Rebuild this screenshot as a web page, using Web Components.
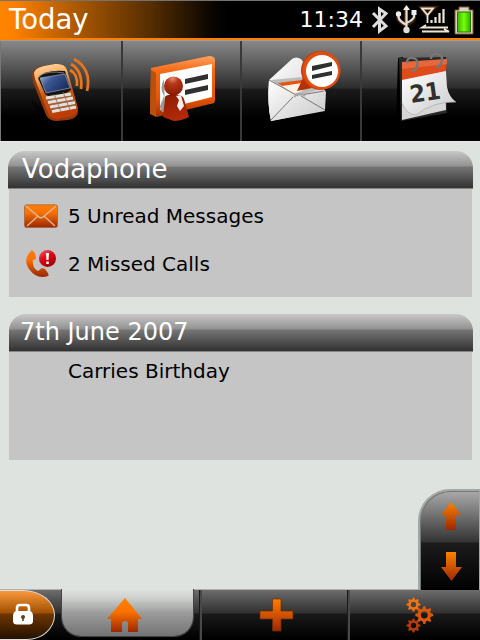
<!DOCTYPE html>
<html lang="en"><head><meta charset="utf-8"><title>Today</title>
<style>
html,body{margin:0;height:100%;overflow:hidden;background:#dfe3df;font-family:"DejaVu Sans",sans-serif}
svg{display:block}
</style></head><body>
<svg width="0" height="0" style="position:absolute"><defs>
<linearGradient id="or" x2="0" y2="1"><stop stop-color="#ff7e08"/><stop offset=".35" stop-color="#f97205"/><stop offset="1" stop-color="#992600"/></linearGradient>
<linearGradient id="edge" x2="0" y2="1"><stop stop-color="#ffa062"/><stop offset=".25" stop-color="#f26a12"/><stop offset=".7" stop-color="#e65408"/><stop offset="1" stop-color="#9e3300"/></linearGradient>
<linearGradient id="phone" x2=".2" y2="1"><stop stop-color="#ffe0ad"/><stop offset=".25" stop-color="#f9b068"/><stop offset=".6" stop-color="#c85713"/><stop offset="1" stop-color="#bd3d08"/></linearGradient>
<linearGradient id="screen" x2="1" y2=".6"><stop stop-color="#9dbbe6"/><stop offset=".4" stop-color="#3c5891"/><stop offset="1" stop-color="#172c60"/></linearGradient>
<linearGradient id="paper" x2="1" y2="1"><stop stop-color="#fff"/><stop offset="1" stop-color="#c9c9c9"/></linearGradient>
<radialGradient id="head" cx=".45" cy=".1" r=".9"><stop stop-color="#e58a70"/><stop offset=".35" stop-color="#b53616"/><stop offset="1" stop-color="#861a00"/></radialGradient>
<linearGradient id="torso" x2=".3" y2="1"><stop stop-color="#8a1c04"/><stop offset="1" stop-color="#b32a08"/></linearGradient>
<linearGradient id="red" x2=".6" y2="1"><stop stop-color="#f1676d"/><stop offset=".5" stop-color="#df0717"/><stop offset="1" stop-color="#a30009"/></linearGradient>
</defs></svg>
<today-screen>
<status-bar slot="status" heading="Today" time="11:34"></status-bar>
<app-tile slot="apps"><svg width="120" height="100" viewBox="1 41 120 100">
<path d="M32 100Q31 108 48 122L46 111z" fill="#000" opacity=".5"/>
<path d="M32 75Q33 68 42 66L55 64Q65 63 67 70L78 110Q79 118 68 120L57 121Q49 121 46 115L33 82Z" fill="#96380b"/>
<path d="M34 73Q35 68 44 66L55 64Q65 63 67 70L78 108Q78 115 68 117L58 119Q50 119 48 113L35 79Z" fill="url(#phone)"/>
<path d="M38 78Q46 69 65 71L71 90Q63 96 48 96L45 94Z" fill="#151515"/><path d="M39 76Q48 70 64 73" stroke="#777" fill="none"/>
<path d="M40 78L65 74L70 88L46 93Z" fill="url(#screen)" stroke="#a5b5d2" stroke-width=".6"/>
<g stroke="#e0dfda" stroke-width="3.200"><path d="M46 98L71 94M48 102.500L73 98M50 107L75 102.500M52 111.500L76 107"/></g><g stroke="#8b7060" stroke-width=".8"><path d="M54 94L61 112M63 92L70 110M47 100.500L72 96M49 105L74 100.500M51 109.500L75 105"/></g>
<g fill="none" stroke-width="2.800"><path d="M70 70Q78 74 77 86" stroke="#ef7918"/><path d="M71 64Q83 71 81 89" stroke="#e97519"/><path d="M74 59Q92 69 87 91" stroke="#e4751c"/></g>
</svg></app-tile>
<app-tile slot="apps"><svg width="117" height="100" viewBox="123 41 117 100">
<path d="M151 68L209 56Q215 56 215 60V100Q215 104 210 104L157 117L150 113Z" fill="url(#edge)"/>
<path d="M151 70L156 73V117L150 114Z" fill="#b85110"/>
<path d="M160 74L212 64V97L160 110Z" fill="#fff"/>
<path d="M185 79L208 74V79L185 84ZM185 90L208 85V90L185 95Z" fill="#303030"/>
<path d="M164 79Q159 88 164 96L160 106Q160 113 165 112Z" fill="#9b9b9b"/>
<path d="M165 97Q167 94 174 95Q182 94 184 99L189 117Q181 121 174 121L163 117Z" fill="url(#torso)"/>
<path d="M176 96L181 95L182 99L184 106L180 111L177 106L179 100Z" fill="#eee"/>
<circle cx="173.500" cy="86" r="9.500" fill="url(#head)"/>
</svg></app-tile>
<app-tile slot="apps"><svg width="118" height="100" viewBox="242 41 118 100">
<path d="M269 80L292 59Q296 56 301 59L326 92L325 110L271 121Q267 104 269 80Z" fill="url(#paper)"/>
<path d="M271 80L302 77L324 91L299 99Z" fill="#bcbcbc"/>
<path d="M278 83L302 80V90L294 94Z" fill="#e6540d"/><path d="M282 86L302 83V91L294 94Z" fill="#fff3e8"/>
<path d="M269 80L299 96L324 88L325 111L271 121Q267 104 269 80Z" fill="url(#paper)"/>
<path d="M269 80L298 96M324 91L301 95M271 120L293 97M325 110L301 96" stroke="#777" fill="none"/><path d="M294 97L297 94H302L305 96" stroke="#aaa" fill="none" stroke-width="2"/>
<path d="M303 78L297 91L312 88Z" fill="#b53103"/><circle cx="320.500" cy="70.500" r="19.500" fill="#c73b05"/><circle cx="321.500" cy="70.500" r="19" fill="#e14c10"/><circle cx="322" cy="71" r="16" fill="#fff"/>
<path d="M312 66L332 62V66L312 71ZM312 75L332 71V75L312 79Z" fill="#303030"/>
</svg></app-tile>
<app-tile slot="apps"><svg width="118" height="100" viewBox="362 41 118 100">
<path d="M398 58L403 57V120L396 123Z" fill="#000"/>
<path d="M399 58L446 57L447 113L401 121Z" fill="#292929"/>
<path d="M402 79L445 70L446 110L402 120Z" fill="#d6d6d6"/>
<path d="M402 62L447 59L446 72L402 81Z" fill="#df4c1c"/><path d="M402 62L447 59V64L402 69Z" fill="#ef835d" opacity=".5"/>
<path d="M402 80L446 71L447 87Q449 97 456 102Q434 101 416 115Q407 115 402 103Z" fill="url(#paper)"/>
<path d="M402 103Q407 115 416 115Q434 101 456 102" fill="none" stroke="#aaa" stroke-width=".7"/>
<g fill="none" stroke="#777" stroke-width="2.400"><path d="M411 71C419 70 420 59 413 58C408 57 407 60 407 63M436 67C444 65 444 54 437 54C432 53 431 57 431 59"/></g>
<text x="411" y="103" transform="rotate(-8 411 103)" font-family="DejaVu Sans" font-size="24" font-weight="700" fill="#303030" textLength="31" lengthAdjust="spacingAndGlyphs">21</text>
</svg></app-tile>
<info-card class="a" heading="Vodaphone">
<info-row label="5 Unread Messages"><svg width="34" height="24" viewBox="0 0 34 24"><rect x=".5" y=".8" width="33" height="22.700" rx="2" fill="url(#or)" stroke="#a45e35" stroke-width=".7"/><path d="M2 2L15 13L17 14L19 13L32 2M3 22L14 12M31 22L20 12" stroke="#e0b390" stroke-width="1.500" fill="none"/></svg></info-row>
<info-row label="2 Missed Calls"><svg width="34" height="30" viewBox="0 0 34 30"><path d="M8 1Q-2 10 5 20Q13 31 24 27Q26 26 21 20L18 19L14 22Q8 19 9 11L12 10Q12 4 8 1Z" fill="url(#or)"/><circle cx="23.500" cy="9.500" r="8.500" fill="url(#red)"/><path d="M22 4H25L24.500 11H22.500ZM22.300 12.500H24.800V15H22.300Z" fill="#fff"/></svg></info-row>
</info-card>
<info-card class="b" heading="7th June 2007"><info-row label="Carries Birthday"></info-row></info-card>
<scroll-pad slot="pad"></scroll-pad>
<bottom-nav slot="nav"></bottom-nav>
</today-screen>
<script>
const define=(name,html)=>customElements.define(name,class extends HTMLElement{
 constructor(){super();const t=document.createElement('template');t.innerHTML=html;this.attachShadow({mode:'open'}).append(t.content.cloneNode(true));}
 connectedCallback(){this.shadowRoot.querySelectorAll('[data-attr]').forEach(e=>e.textContent=this.getAttribute(e.dataset.attr)||'');}
});
define('today-screen',`<style>:host{display:flex;flex-direction:column;width:480px;height:640px;position:relative;background:#dfe3df}.apps{display:grid;grid-template-columns:121px 119px 120px 120px;height:100px;flex:none}.cards{flex:1;display:flex;flex-direction:column;gap:17px;padding:9px 8px 0 9px;border-top:1px solid #eee4e9}slot[name=pad]::slotted(*){position:absolute;right:0;bottom:50px}</style><slot name="status"></slot><div class="apps"><slot name="apps"></slot></div><div class="cards"><slot></slot></div><slot name="pad"></slot><slot name="nav"></slot>`);
define('status-bar',`<style>:host{display:flex;box-sizing:border-box;height:41px;border-top:1px solid #737373;border-bottom:1px solid #a59b93;box-shadow:inset 0 -2px #ff8000;background:linear-gradient(90deg,#ff8500 0,#fc8000 14px,#a95700 78px,#562e00 150px,#080400 213px,#000 230px);color:#fff;padding:0 0 2px 9px;align-items:center}b{font:27.500px/37px "DejaVu Sans",sans-serif;flex:1}time{font-size:22px;line-height:37px;margin-right:5px}svg{display:block;flex:none}</style><b data-attr="heading"></b><time data-attr="time"></time>
<svg width="112" height="37" viewBox="368 1 112 37"><g fill="none" stroke="#dedede" stroke-linejoin="miter"><path d="M373 13L386 26L379.500 31V9L386 13.500L373 27" stroke-width="3"/><g stroke="#764008" stroke-width="4" opacity=".55"><path d="M406 7V29M398 14V18Q399 22 406 25M414 15V18Q413 22 406 25M422 8H434L427 15Z"/></g><path d="M406.500 8V30M398.500 14V17Q399 21 406.500 25M414 14V17Q413 20 406.500 23" stroke-width="2.200"/><path d="M422 8.500H433L427.500 15ZM427.500 14V23" stroke-width="1.800" stroke="#f0e5d5"/><path d="M431.500 23V20M435.500 23V17M439.500 23V13M443.500 23V9" stroke-width="2.200" stroke="#f0e5d5"/><path d="M448 27.500H422L426 25M422 31.500H449L444 29" stroke-width="1.800" stroke="#f0e5d5"/></g><path d="M403 10L406.500 5L410 10ZM411.500 10H416.500V15H411.500Z" fill="#eee"/><circle cx="398.500" cy="14" r="2.700" fill="#eee"/><circle cx="406.500" cy="30" r="3.200" fill="#ddd"/>
<path d="M455 10H459V7H469V10H473V34H455Z" fill="#ddd2c4" stroke="#7d572f"/><linearGradient id="g"><stop stop-color="#37b700"/><stop offset=".5" stop-color="#77ff08"/><stop offset="1" stop-color="#30ad00"/></linearGradient><rect x="457.500" y="12" width="13" height="20" fill="url(#g)" stroke="#287400"/></svg>`);
define('app-tile',`<style>:host{display:block;box-sizing:border-box;height:100px;border-left:2px solid #393939;background:linear-gradient(#888 0,#2d2d2d 47px,#1b1b1b 48px,#000 76px,#000);overflow:hidden}:host(:first-of-type){border-left:1px solid #777}</style><slot></slot>`);
define('info-card',`<style>:host{display:block;height:146px;width:463px}h2{box-sizing:border-box;height:38px;margin:0 -1px;border-radius:17px 17px 0 0;border-bottom:1px solid #858585;background:linear-gradient(#c8c8c8 0,#929292 15px,#757575 16px,#323232 37px);font-weight:400;font-size:26px;line-height:36px;color:#fff;padding-left:14px}:host(.b) h2{font-size:24px;padding-left:11px;line-height:37px;margin-left:0}.rows{box-sizing:border-box;height:108px;background:#c5c5c5;display:flex;flex-direction:column;gap:18px;padding-top:12px}:host(.b) .rows{padding-top:4px}</style><h2 data-attr="heading"></h2><div class="rows"><slot></slot></div>`);
define('info-row',`<style>:host{display:grid;grid-template-columns:34px 1fr;column-gap:10px;align-items:center;height:30px;padding-left:15px;font-size:20px;line-height:30px;color:#000;white-space:nowrap}span{grid-column:2}</style><slot></slot><span data-attr="label"></span>`);
define('scroll-pad',`<style>:host{display:flex;flex-direction:column;box-sizing:border-box;width:62px;height:101px;border:solid #a3a8a5;border-width:2px 1px 0 2px;border-radius:32px 0 0 0;background:linear-gradient(#aaa 0,#333 51px,#1c1c1c 52px,#000 99px);overflow:hidden;box-shadow:inset 1px 1px #777}svg{display:block}</style><svg width="60" height="99" viewBox="420 491 60 99"><defs><linearGradient id="o" x2="0" y2="1"><stop stop-color="#ff8200"/><stop offset="1" stop-color="#9b2800"/></linearGradient></defs><path fill="url(#o)" d="M451 502L461 515H456V530H446V515H441Z"/><path fill="url(#o)" d="M446 552H456V567H462L451.500 581L441 567H446Z"/></svg>`);
const gear=(x,y,r,c)=>{const p=[];for(let i=0;i<32;i++){const a=(i-.5)*Math.PI/16,q=(i%4<2)?r:r*.73;p.push((x+Math.cos(a)*q).toFixed(2)+' '+(y+Math.sin(a)*q).toFixed(2));}const h=r*.38;return `<path fill="${c}" fill-rule="evenodd" d="M${p.join('L')}ZM${x-h} ${y}a${h} ${h} 0 1 0 ${2*h} 0a${h} ${h} 0 1 0 ${-2*h} 0Z"/>`;};
define('bottom-nav',`<style>:host{display:grid;grid-template-columns:62px 138px 148px 132px;box-sizing:border-box;height:51px;border-top:1px solid #afb2af;background:linear-gradient(#6c6c6c 0,#303030 23px,#1a1a1a 24px,#000 49px);flex:none}div{box-sizing:border-box;height:50px}svg{display:block}.lock{width:55px;border:1px solid #ddd;border-left:0;border-radius:0 32px 28px 0/0 25px 25px 0;background:linear-gradient(#fa983d 0,#a05000 22px,#6e3500 23px,#211000 49px)}.home{width:131px;height:47px;margin-top:-1px;border-radius:0 0 19px 19px;background:linear-gradient(#dfe3df 0,#d0d3d0 8px,#999 25px,#737373 47px);box-shadow:0 0 0 1px #444;clip-path:inset(0 -1px -1px -1px)}.sep{border-left:2px solid #484848;box-shadow:-1px 0 #181818}</style>
<div class="lock"><svg width="54" height="48" viewBox="0 591 54 48"><path d="M17 611V608Q17 605 20 605H26Q29 605 29 608V611" fill="none" stroke="#fff" stroke-width="2.600"/><path d="M16 611H30Q33 612 33 616V621Q33 624.500 29 624.500H17Q13 624.500 13 621V616Q13 612 16 611Z" fill="#fff"/><circle cx="23" cy="617" r="2" fill="#60431d"/><path d="M22.200 617H23.800V621H22.200Z" fill="#60431d"/></svg></div>
<div class="home"><svg width="131" height="47" viewBox="62 589 131 47"><defs><linearGradient id="h" x2="0" y2="1"><stop stop-color="#ff8200"/><stop offset=".4" stop-color="#fb7200"/><stop offset="1" stop-color="#9c2800"/></linearGradient></defs><path fill="url(#h)" d="M125 598L142 619H138V632H128V624Q128 621 125 621Q122 621 122 624V632H111V619H107Z"/></svg></div>
<div class="sep"><svg width="146" height="50" viewBox="202 590 146 50"><defs><linearGradient id="p" x2="0" y2="1"><stop stop-color="#ff7e00"/><stop offset="1" stop-color="#9e2700"/></linearGradient></defs><path fill="url(#p)" stroke="#6a2c09" stroke-width=".7" d="M272.500 599H281V611H293V619H281V631H272.500V619H260V611H272.500Z"/></svg></div>
<div class="sep"><svg width="130" height="50" viewBox="350 590 130 50">${gear(413.5,604.5,7,'#f37410')}${gear(424.3,615,9,'#dc570e')}${gear(413.5,625.5,7,'#b53b08')}</svg></div>`);
</script></body></html>
